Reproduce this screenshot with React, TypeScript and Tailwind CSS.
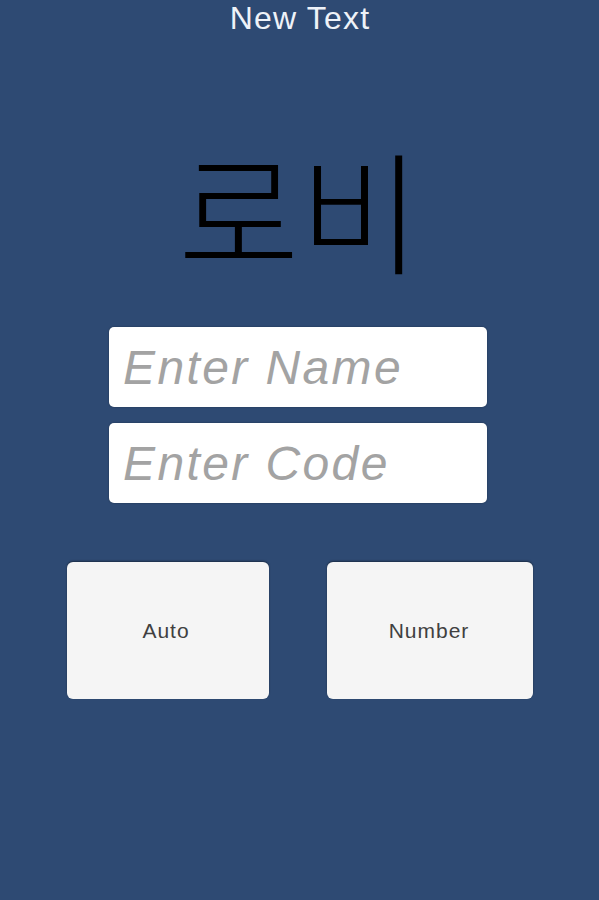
import React from "react";

export default function App() {
  return (
    <div
      className="min-h-[900px] w-full bg-[#2e4a73] flex flex-col items-center"
      style={{ fontFamily: '"Liberation Sans", Arial, sans-serif' }}
    >
      <div className="text-[32px] leading-[37px] text-[#eef2f8] tracking-[1.2px] pl-[1px]">New Text</div>

      <div
        className="mt-[104px] text-[132px] leading-[132px] text-black font-light"
        style={{ fontFamily: '"Noto Sans CJK KR", "Noto Sans", sans-serif' }}
      >
        로비
      </div>

      <div className="mt-[54px] flex flex-col gap-4 w-[378px] mr-[3px]">
        <div className="h-[80px] bg-white rounded-[5px] flex items-center pl-[14px] shadow-[0_0_2px_rgba(0,0,0,0.35)]">
          <span className="text-[48px] italic text-[#a3a3a3] tracking-[2.4px] leading-none mt-[2px]">Enter Name</span>
        </div>
        <div className="h-[80px] bg-white rounded-[5px] flex items-center pl-[14px] shadow-[0_0_2px_rgba(0,0,0,0.35)]">
          <span className="text-[48px] italic text-[#a3a3a3] tracking-[2.4px] leading-none mt-[2px]">Enter Code</span>
        </div>
      </div>

      <div className="mt-[59px] flex gap-[58px] pl-[1px]">
        <div className="w-[202px] h-[137px] bg-[#f5f5f5] rounded-[6px] flex items-center justify-center shadow-[0_-1px_2px_rgba(0,0,0,0.4)]">
          <span className="text-[21px] text-[#404040] tracking-[1px] mr-[4px]">Auto</span>
        </div>
        <div className="w-[206px] h-[137px] bg-[#f5f5f5] rounded-[6px] flex items-center justify-center shadow-[0_-1px_2px_rgba(0,0,0,0.4)]">
          <span className="text-[21px] text-[#404040] tracking-[1px] mr-[2px]">Number</span>
        </div>
      </div>
    </div>
  );
}
